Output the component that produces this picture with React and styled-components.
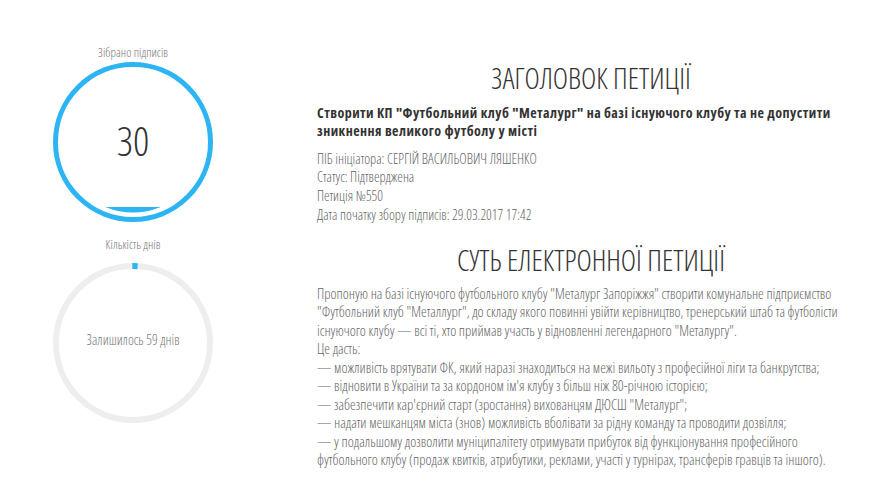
import React from "react";
import styled, { createGlobalStyle } from "styled-components";

const GlobalStyle = createGlobalStyle`
  html, body { margin: 0; padding: 0; background: #fff; }
  body {
    font-family: "Open Sans", "Noto Sans", sans-serif;
    font-stretch: 75%;
    font-weight: 300;
    color: #333;
  }
`;

const Page = styled.div`
  display: flex;
  align-items: flex-start;
  width: 869px;
`;

const Sidebar = styled.aside`
  width: 266px;
  padding-top: 44px;
  display: flex;
  flex-direction: column;
  align-items: center;
`;

const GaugeLabel = styled.div`
  font-size: 12.5px;
  line-height: 18px;
  color: #777;
  margin-top: ${(p) => p.$offset || 0}px;
  margin-bottom: ${(p) => p.$gap || 0}px;
`;

const Gauge = styled.div`
  display: grid;
  width: 160px;
  height: 160px;
  & > * {
    grid-area: 1 / 1;
  }
`;

const GaugeSvg = styled.svg`
  width: 160px;
  height: 160px;
  display: block;
`;

const GaugeValue = styled.div`
  align-self: center;
  justify-self: center;
  font-size: ${(p) => p.$size}px;
  color: ${(p) => p.$color};
  margin-top: ${(p) => p.$shift || 0}px;
  white-space: nowrap;
`;

const Content = styled.main`
  width: 548px;
  margin-left: 51px;
  padding-top: 60px;
`;

const Heading = styled.h2`
  margin: ${(p) => p.$top || 0}px 0 0;
  font-size: 29px;
  line-height: 36px;
  font-weight: 300;
  text-align: center;
  color: #333;
  text-transform: uppercase;
`;

const Lead = styled.p`
  margin: 7.75px 0 0;
  font-size: 14px;
  line-height: 18.5px;
  font-weight: 700;
  font-stretch: 87.5%;
  letter-spacing: 0.45px;
  color: #333;
`;

const Meta = styled.ul`
  list-style: none;
  margin: 8.9px 0 0;
  padding: 0;
  font-size: 14px;
  line-height: 18.7px;
  color: #666;
`;

const Body = styled.div`
  margin-top: 6.75px;
  padding-right: 10px;
  font-size: 14.4px;
  line-height: 18.5px;
  color: #666;
`;

const Line = styled.div``;

const BLUE = "#2cb5f2";

function SignaturesGauge({ value }) {
  return (
    <Gauge>
      <GaugeSvg viewBox="0 0 160 160">
        <defs>
          <clipPath id="fillClip">
            <rect x="0" y="145" width="160" height="20" />
          </clipPath>
        </defs>
        <circle cx="80" cy="80" r="77.5" fill="none" stroke={BLUE} strokeWidth="5" />
        <circle cx="80" cy="80" r="70.5" fill={BLUE} clipPath="url(#fillClip)" />
      </GaugeSvg>
      <GaugeValue $size={40} $color="#333" $shift={-4}>{value}</GaugeValue>
    </Gauge>
  );
}

function DaysGauge({ text, passed, total }) {
  const r = 77;
  const c = 2 * Math.PI * r;
  const frac = passed / total;
  return (
    <Gauge>
      <GaugeSvg viewBox="0 0 160 160">
        <circle cx="80" cy="80" r={r} fill="none" stroke="#eeeeee" strokeWidth="6" />
        <circle
          cx="80"
          cy="80"
          r={r}
          fill="none"
          stroke={BLUE}
          strokeWidth="6"
          strokeDasharray={`${c * frac} ${c}`}
          transform="rotate(-90.5 80 80)"
        />
      </GaugeSvg>
      <GaugeValue $size={14} $color="#777" $shift={-8}>{text}</GaugeValue>
    </Gauge>
  );
}

const meta = [
  "ПІБ ініціатора: СЕРГІЙ ВАСИЛЬОВИЧ ЛЯШЕНКО",
  "Статус: Підтверджена",
  "Петиція №550",
  "Дата початку збору підписів: 29.03.2017 17:42",
];

const body = [
  "Пропоную на базі існуючого футбольного клубу \"Металург Запоріжжя\" створити комунальне підприємство \"Футбольний клуб \"Металлург\", до складу якого повинні увійти керівництво, тренерський штаб та футболісти існуючого клубу — всі ті, хто приймав участь у відновленні легендарного \"Металургу\".",
  "Це дасть:",
  "— можливість врятувати ФК, який наразі знаходиться на межі вильоту з професійної ліги та банкрутства;",
  "— відновити в України та за кордоном ім'я клубу з більш ніж 80-річною історією;",
  "— забезпечити кар'єрний старт (зростання) вихованцям ДЮСШ \"Металург\";",
  "— надати мешканцям міста (знов) можливість вболівати за рідну команду та проводити дозвілля;",
  "— у подальшому дозволити муніципалітету отримувати прибуток від функціонування професійного футбольного клубу (продаж квитків, атрибутики, реклами, участі у турнірах, трансферів гравців та іншого).",
];

export default function App() {
  return (
    <>
      <GlobalStyle />
      <Page>
        <Sidebar>
          <GaugeLabel>Зібрано підписів</GaugeLabel>
          <SignaturesGauge value={30} />
          <GaugeLabel $offset={14} $gap={9}>Кількість днів</GaugeLabel>
          <DaysGauge text="Залишилось 59 днів" passed={1} total={90} />
        </Sidebar>
        <Content>
          <Heading>Заголовок петиції</Heading>
          <Lead>
            Створити КП "Футбольний клуб "Металург" на базі існуючого клубу та не допустити
            зникнення великого футболу у місті
          </Lead>
          <Meta>
            {meta.map((m) => (
              <li key={m}>{m}</li>
            ))}
          </Meta>
          <Heading $top={17.5}>Суть електронної петиції</Heading>
          <Body>
            {body.map((b, i) => (
              <Line key={i}>{b}</Line>
            ))}
          </Body>
        </Content>
      </Page>
    </>
  );
}
